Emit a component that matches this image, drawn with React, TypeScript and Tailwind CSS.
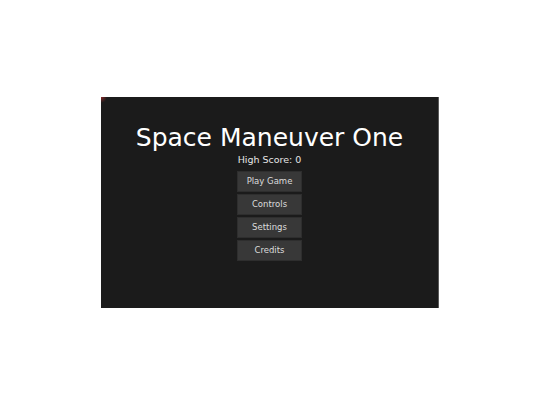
export default function App() {
  const buttons = ['Play Game', 'Controls', 'Settings', 'Credits'];

  return (
    <div className="h-screen w-full bg-white flex items-center justify-center">
      {/* Game canvas */}
      <div
        className="relative w-[338px] h-[211px] bg-[#1b1b1b] border-r border-[#5a5a5a] flex flex-col items-center pt-[28px] text-white"
        style={{ fontFamily: '"DejaVu Sans", Verdana, sans-serif' }}
      >
        <div className="absolute left-0 top-0 w-[6px] h-[6px] bg-[radial-gradient(circle_at_top_left,#8a2a2a,transparent_70%)]" />

        <h1 className="text-[25px] leading-none text-white">Space Maneuver One</h1>
        <p className="mt-[5px] text-[9.5px] leading-none text-[#e6e6e6]">High Score: 0</p>

        <div className="mt-[6px] flex flex-col gap-[2px]">
          {buttons.map((label) => (
            <button
              key={label}
              className="w-[65px] h-[21px] bg-[#383838] border border-[#2e2e2e] text-[8.5px] leading-none text-[#dcdcdc]"
            >
              {label}
            </button>
          ))}
        </div>
      </div>
    </div>
  );
}
